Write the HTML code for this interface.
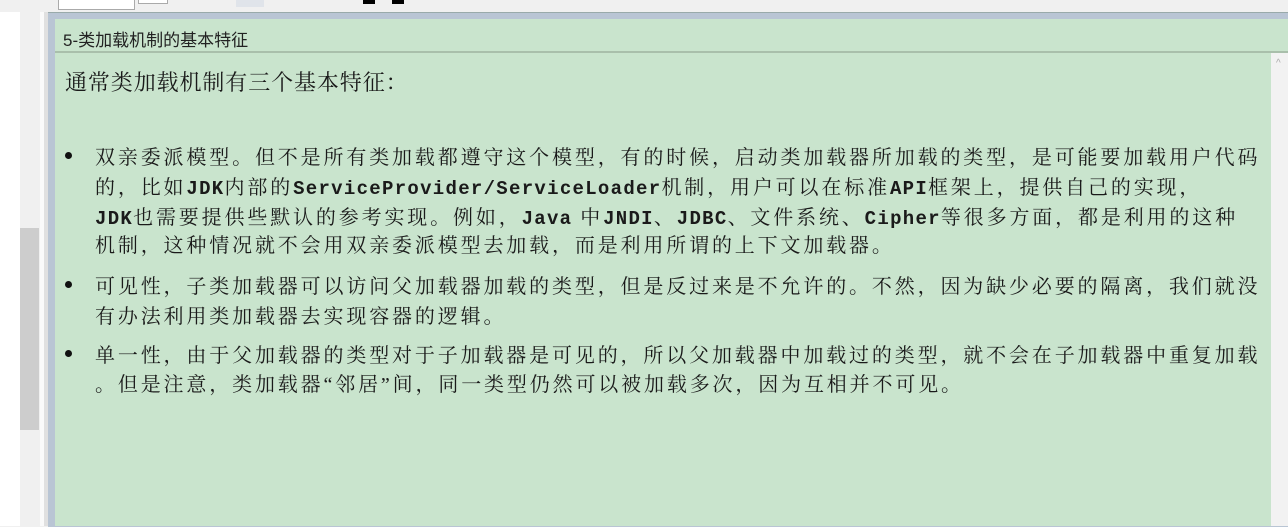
<!DOCTYPE html>
<html><head><meta charset="utf-8"><style>
body{margin:0;width:1288px;height:526px;overflow:hidden;background:#f0f0f0;position:relative;font-family:"Liberation Sans","Noto Sans CJK SC",sans-serif;}
.abs{position:absolute}
.l{font-size:20px;letter-spacing:2.85px;color:#1a1a1a;white-space:nowrap;position:absolute;left:95px;font-family:"Liberation Serif","Noto Serif CJK SC",serif;}
.m{font-family:"Liberation Mono","Noto Sans CJK SC",monospace;font-weight:bold;letter-spacing:1.3px;font-size:19px}
.b{position:absolute;left:65px;width:7px;height:7px;border-radius:50%;background:#111}
</style></head><body>
<div class="abs" style="left:0;top:0;width:20px;height:526px;background:#fff"></div>
<div class="abs" style="left:20px;top:0;width:20px;height:526px;background:#f0f0f0"></div>
<div class="abs" style="left:20px;top:228px;width:19px;height:202px;background:#cdcdcd"></div>
<div class="abs" style="left:40px;top:0;width:4px;height:526px;background:#fafafa"></div>
<div class="abs" style="left:44px;top:0;width:4px;height:526px;background:#e0e0e0"></div>
<div class="abs" style="left:0;top:0;width:1288px;height:12px;background:#f0f0f0"></div>
<div class="abs" style="left:58px;top:0;width:75px;height:9px;background:#fff;border:1px solid #aaa;border-top:0"></div>
<div class="abs" style="left:138px;top:0;width:28px;height:3px;background:#fff;border:1px solid #aaa;border-top:0"></div>
<div class="abs" style="left:236px;top:0;width:28px;height:7px;background:#e0e4ea"></div>
<div class="abs" style="left:363px;top:0;width:12px;height:4px;background:#000"></div>
<div class="abs" style="left:392px;top:0;width:12px;height:4px;background:#000"></div>
<div class="abs" style="left:48px;top:12px;width:1240px;height:514px;background:#b9c5d4;border-top:1px solid #9aa"></div>
<div class="abs" style="left:55px;top:19px;width:1233px;height:507px;background:#c9e4cd"></div>
<div class="abs" style="left:63px;top:26px;font-size:17px;color:#222">5-类加载机制的基本特征</div>
<div class="abs" style="left:55px;top:51px;width:1233px;height:2px;background:#a9bfab"></div>
<div class="abs" style="left:1271px;top:53px;width:17px;height:473px;background:#f2f2f2"></div>
<div class="abs" style="left:1276px;top:58px;font-size:10px;color:#aaa">^</div>
<div class="abs" style="left:65px;top:66px;font-size:22px;letter-spacing:0.9px;color:#1a1a1a;font-family:'Liberation Serif','Noto Serif CJK SC',serif">通常类加载机制有三个基本特征：</div>
<div class="b" style="top:152px"></div>
<div class="l" style="top:141px">双亲委派模型。但不是所有类加载都遵守这个模型，有的时候，启动类加载器所加载的类型，是可能要加载用户代码</div>
<div class="l" style="top:171px">的，比如<span class="m">JDK</span>内部的<span class="m">ServiceProvider/ServiceLoader</span>机制，用户可以在标准<span class="m">API</span>框架上，提供自己的实现，</div>
<div class="l" style="top:201px"><span class="m">JDK</span>也需要提供些默认的参考实现。例如，<span class="m">Java</span> 中<span class="m">JNDI</span>、<span class="m">JDBC</span>、文件系统、<span class="m">Cipher</span>等很多方面，都是利用的这种</div>
<div class="l" style="top:229px">机制，这种情况就不会用双亲委派模型去加载，而是利用所谓的上下文加载器。</div>
<div class="b" style="top:281px"></div>
<div class="l" style="top:270px">可见性，子类加载器可以访问父加载器加载的类型，但是反过来是不允许的。不然，因为缺少必要的隔离，我们就没</div>
<div class="l" style="top:300px">有办法利用类加载器去实现容器的逻辑。</div>
<div class="b" style="top:350px"></div>
<div class="l" style="top:339px">单一性，由于父加载器的类型对于子加载器是可见的，所以父加载器中加载过的类型，就不会在子加载器中重复加载</div>
<div class="l" style="top:368px">。但是注意，类加载器“邻居”间，同一类型仍然可以被加载多次，因为互相并不可见。</div>
</body></html>
